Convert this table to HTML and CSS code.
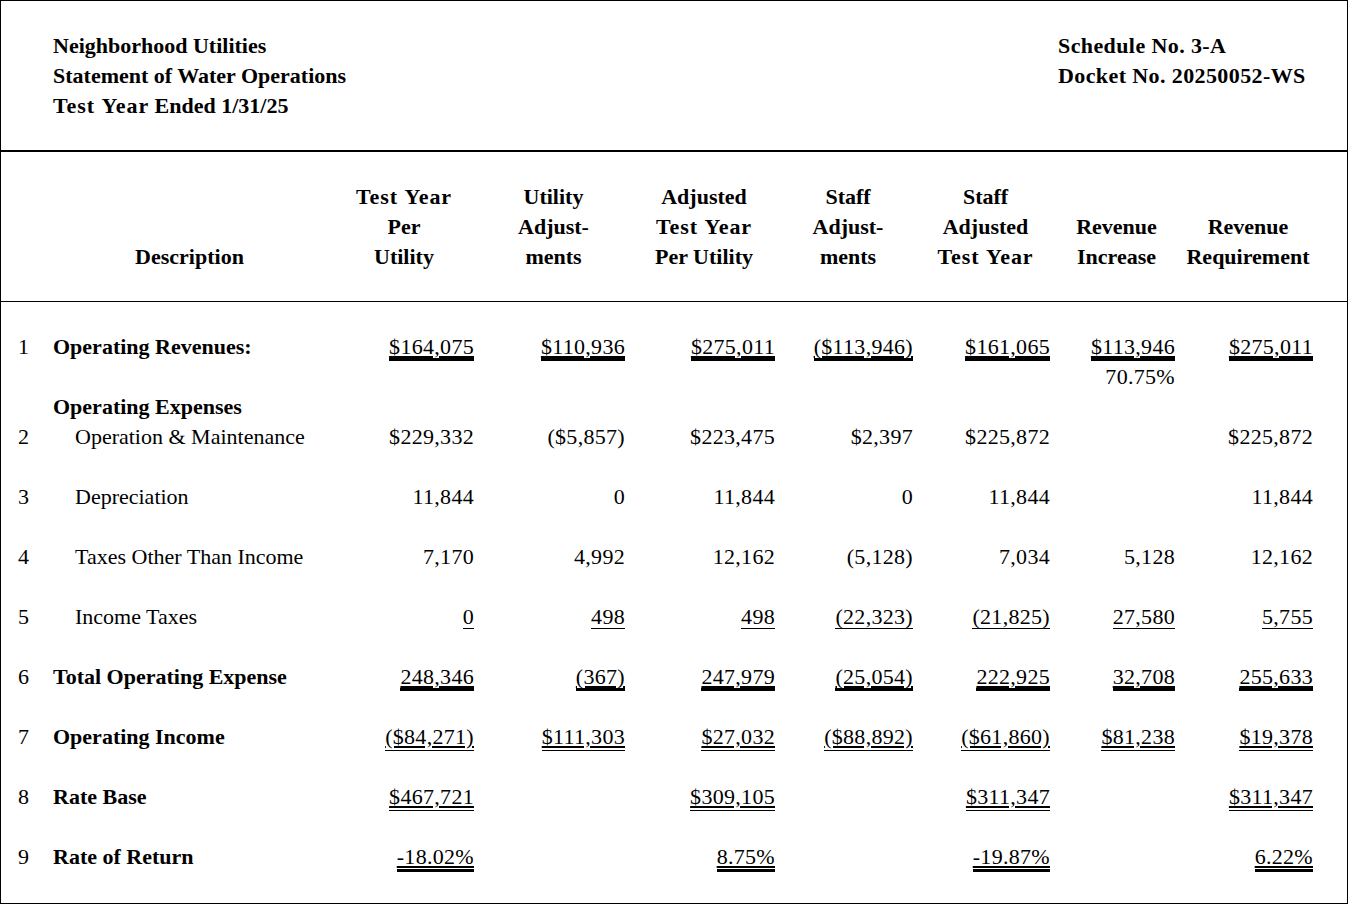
FILE: index.html
```html
<!DOCTYPE html>
<html lang="en">
<head>
<meta charset="utf-8">
<title>Statement of Water Operations</title>
<link rel="stylesheet" href="styles.css">
</head>
<body>
<div class="sheet">
  <header class="sheet-head">
    <div class="head-left">
      <div>Neighborhood Utilities</div>
      <div>Statement of Water Operations</div>
      <div><span class="ty">Test Year</span> Ended 1/31/25</div>
    </div>
    <div class="head-right">
      <div>Schedule No. 3-A</div>
      <div>Docket No. 20250052-WS</div>
    </div>
  </header>
  <table class="schedule">
    <colgroup>
      <col class="c-no">
      <col class="c-desc">
      <col class="c-1">
      <col class="c-2">
      <col class="c-3">
      <col class="c-4">
      <col class="c-5">
      <col class="c-6">
      <col class="c-7">
      <col class="c-end">
    </colgroup>
    <thead>
      <tr>
        <th></th>
        <th class="th-desc">Description</th>
        <th class="th-num"><span class="ty">Test Year</span><br>Per<br>Utility</th>
        <th class="th-num">Utility<br>Adjust-<br>ments</th>
        <th class="th-num">Adjusted<br><span class="ty">Test Year</span><br>Per Utility</th>
        <th class="th-num">Staff<br>Adjust-<br>ments</th>
        <th class="th-num">Staff<br>Adjusted<br><span class="ty">Test Year</span></th>
        <th class="th-num">Revenue<br>Increase</th>
        <th class="th-num">Revenue<br>Requirement</th>
        <th></th>
      </tr>
    </thead>
    <tbody>
      <tr class="first">
        <td class="no">1</td>
        <td class="lbl">Operating Revenues:</td>
        <td class="num"><span class="u ut">$164,075</span></td>
        <td class="num"><span class="u ut">$110,936</span></td>
        <td class="num"><span class="u ut">$275,011</span></td>
        <td class="num"><span class="u ut">($113,946)</span></td>
        <td class="num"><span class="u ut">$161,065</span></td>
        <td class="num"><span class="u ut">$113,946</span><div>70.75%</div></td>
        <td class="num"><span class="u ut">$275,011</span></td>
        <td></td>
      </tr>
      <tr>
        <td class="no"></td>
        <td class="lbl">Operating Expenses</td>
        <td></td><td></td><td></td><td></td><td></td><td></td><td></td><td></td>
      </tr>
      <tr class="gap">
        <td class="no">2</td>
        <td class="sub">Operation &amp; Maintenance</td>
        <td class="num">$229,332</td>
        <td class="num">($5,857)</td>
        <td class="num">$223,475</td>
        <td class="num">$2,397</td>
        <td class="num">$225,872</td>
        <td class="num"></td>
        <td class="num">$225,872</td>
        <td></td>
      </tr>
      <tr class="gap">
        <td class="no">3</td>
        <td class="sub">Depreciation</td>
        <td class="num">11,844</td>
        <td class="num">0</td>
        <td class="num">11,844</td>
        <td class="num">0</td>
        <td class="num">11,844</td>
        <td class="num"></td>
        <td class="num">11,844</td>
        <td></td>
      </tr>
      <tr class="gap">
        <td class="no">4</td>
        <td class="sub">Taxes Other Than Income</td>
        <td class="num">7,170</td>
        <td class="num">4,992</td>
        <td class="num">12,162</td>
        <td class="num">(5,128)</td>
        <td class="num">7,034</td>
        <td class="num">5,128</td>
        <td class="num">12,162</td>
        <td></td>
      </tr>
      <tr class="gap">
        <td class="no">5</td>
        <td class="sub">Income Taxes</td>
        <td class="num"><span class="u s1">0</span></td>
        <td class="num"><span class="u s1">498</span></td>
        <td class="num"><span class="u s1">498</span></td>
        <td class="num"><span class="u s1">(22,323)</span></td>
        <td class="num"><span class="u s1">(21,825)</span></td>
        <td class="num"><span class="u s1">27,580</span></td>
        <td class="num"><span class="u s1">5,755</span></td>
        <td></td>
      </tr>
      <tr class="gap">
        <td class="no">6</td>
        <td class="lbl">Total Operating Expense</td>
        <td class="num"><span class="u ut">248,346</span></td>
        <td class="num"><span class="u ut">(367)</span></td>
        <td class="num"><span class="u ut">247,979</span></td>
        <td class="num"><span class="u ut">(25,054)</span></td>
        <td class="num"><span class="u ut">222,925</span></td>
        <td class="num"><span class="u ut">32,708</span></td>
        <td class="num"><span class="u ut">255,633</span></td>
        <td></td>
      </tr>
      <tr class="gap">
        <td class="no">7</td>
        <td class="lbl">Operating Income</td>
        <td class="num"><span class="u dbl">($84,271)</span></td>
        <td class="num"><span class="u dbl">$111,303</span></td>
        <td class="num"><span class="u dbl">$27,032</span></td>
        <td class="num"><span class="u dbl">($88,892)</span></td>
        <td class="num"><span class="u dbl">($61,860)</span></td>
        <td class="num"><span class="u dbl">$81,238</span></td>
        <td class="num"><span class="u dbl">$19,378</span></td>
        <td></td>
      </tr>
      <tr class="gap">
        <td class="no">8</td>
        <td class="lbl">Rate Base</td>
        <td class="num"><span class="u dbl">$467,721</span></td>
        <td class="num"></td>
        <td class="num"><span class="u dbl">$309,105</span></td>
        <td class="num"></td>
        <td class="num"><span class="u dbl">$311,347</span></td>
        <td class="num"></td>
        <td class="num"><span class="u dbl">$311,347</span></td>
        <td></td>
      </tr>
      <tr>
        <td class="no">9</td>
        <td class="lbl">Rate of Return</td>
        <td class="num"><span class="u dblk">-18.02%</span></td>
        <td class="num"></td>
        <td class="num"><span class="u dblk">8.75%</span></td>
        <td class="num"></td>
        <td class="num"><span class="u dblk">-19.87%</span></td>
        <td class="num"></td>
        <td class="num"><span class="u dblk">6.22%</span></td>
        <td></td>
      </tr>
    </tbody>
  </table>
</div>
</body>
</html>
```

FILE: styles.css
```css
html, body {
  margin: 0;
  padding: 0;
  background: #fff;
}

.sheet {
  width: 1348px;
  height: 904px;
  box-sizing: border-box;
  border: 1px solid #000;
  font-family: "Liberation Serif", "Times New Roman", serif;
  font-size: 22px;
  line-height: 30px;
  color: #000;
  background: #fff;
}

.sheet-head {
  display: grid;
  grid-template-columns: 1005px auto;
  padding: 30px 0 29px 52px;
  border-bottom: 2px solid #000;
  font-weight: bold;
}

.head-right {
  letter-spacing: 0.4px;
}

.ty {
  letter-spacing: 0.9px;
  word-spacing: 1px;
}

.schedule {
  width: 1346px;
  table-layout: fixed;
  border-collapse: separate;
  border-spacing: 0;
}

.c-no { width: 52px; }
.c-desc { width: 273px; }
.c-1 { width: 148px; }
.c-2 { width: 151px; }
.c-3 { width: 150px; }
.c-4 { width: 138px; }
.c-5 { width: 137px; }
.c-6 { width: 125px; }
.c-7 { width: 138px; }
.c-end { width: 34px; }

.schedule th {
  padding: 30px 0 29px 0;
  border-bottom: 1px solid #000;
  font-weight: bold;
  text-align: center;
  vertical-align: bottom;
  white-space: nowrap;
}

.schedule th.th-num {
  padding-left: 8px;
}

.schedule td {
  padding: 0;
  vertical-align: top;
  white-space: nowrap;
}

.schedule tr.first td {
  padding-top: 30px;
}

.schedule tr.gap td {
  padding-bottom: 30px;
}

.no {
  padding-left: 17px !important;
}

.lbl {
  font-weight: bold;
}

.sub {
  padding-left: 22px !important;
}

.num {
  text-align: right;
  letter-spacing: 0.3px;
}

.u {
  display: inline-block;
  line-height: 22px;
}

.s1 {
  border-bottom: 1px solid #000;
}

.ut {
  text-decoration: underline;
  border-bottom: 3px solid #000;
}

.dbl {
  text-decoration: underline;
  border-bottom: 1px solid #000;
  padding-bottom: 2px;
}

.dblk {
  text-decoration: underline;
  border-bottom: 3px solid #000;
  padding-bottom: 1px;
}
```
